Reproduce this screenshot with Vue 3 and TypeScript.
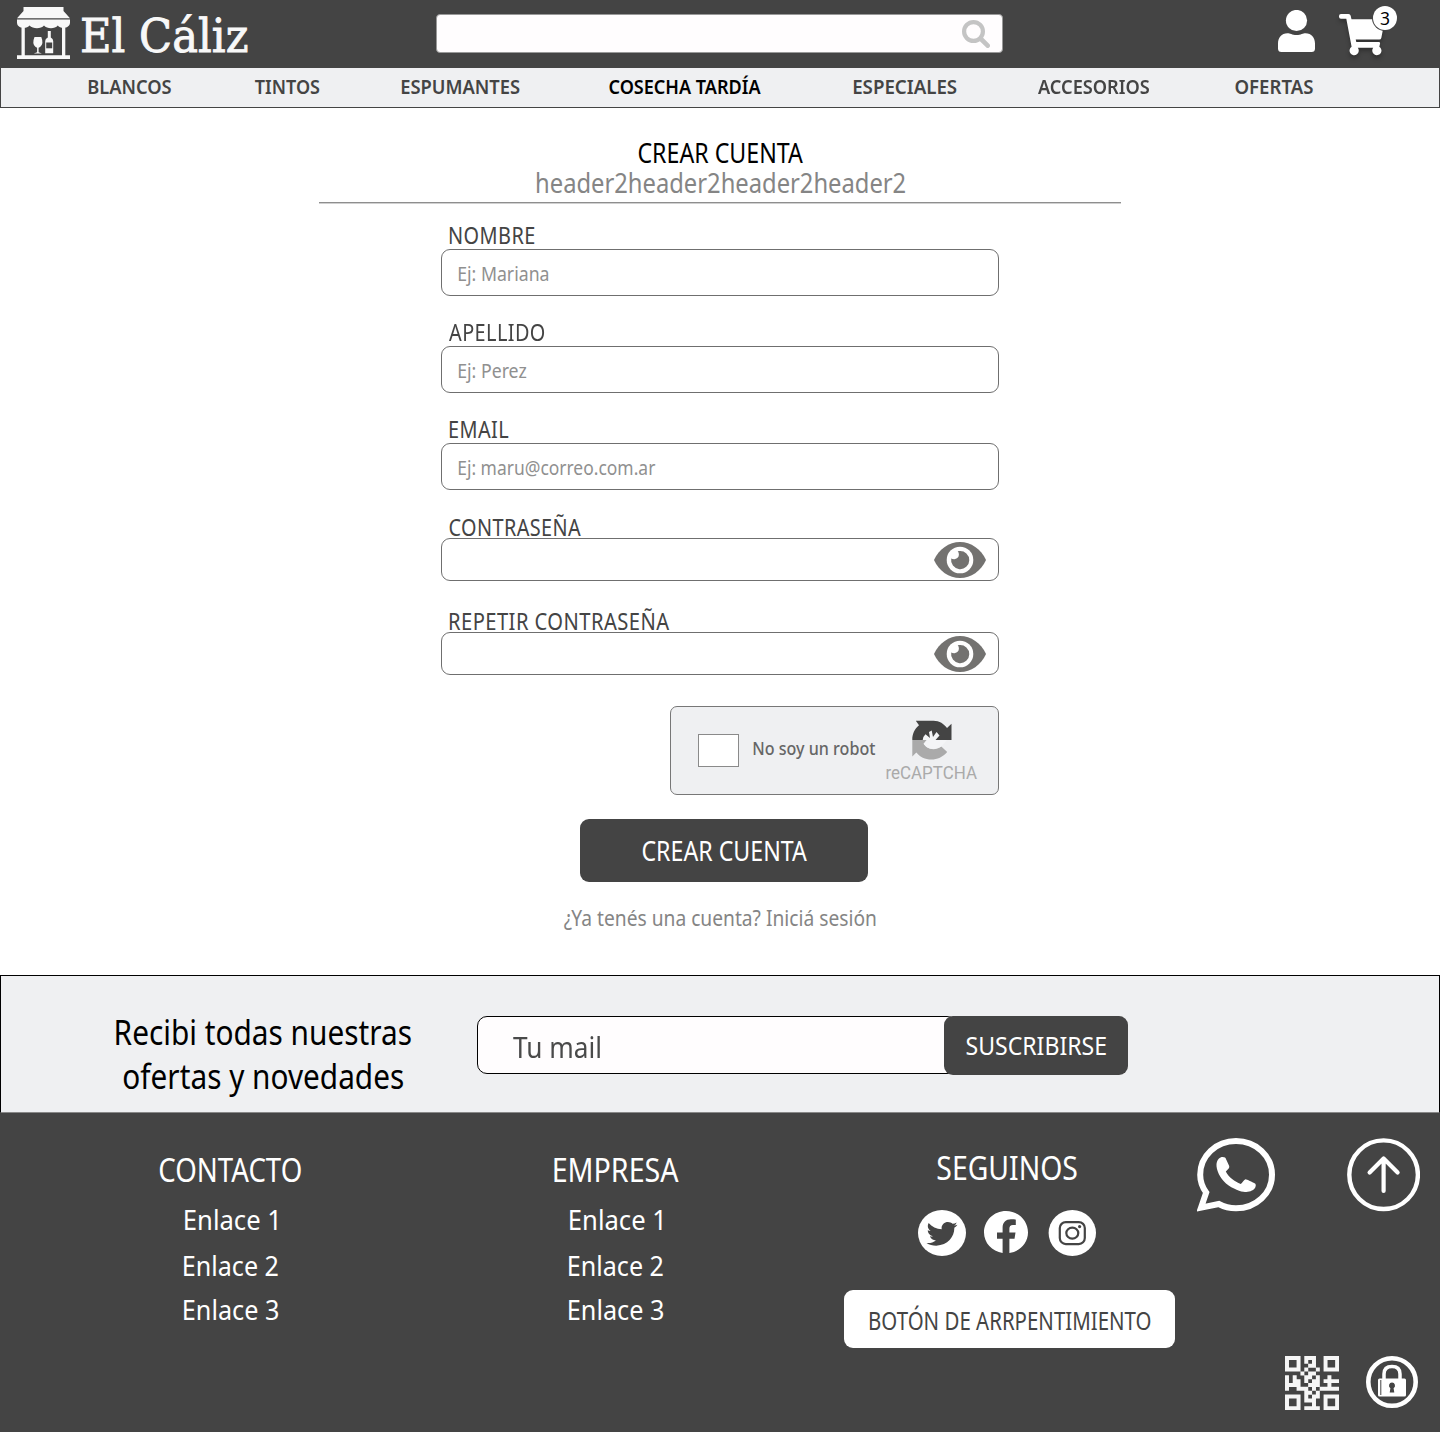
<script setup lang="ts">
import { ref } from 'vue'

// Condenses a text so that its visible ink spans exactly the given width.
// Metrics are taken at ten times the size, as the canvas rounds ink bounds;
const vFit = {
  mounted(el: HTMLElement, binding: { value: number }) {
    const width = binding.value
    const style = getComputedStyle(el)
    const ctx = document.createElement('canvas').getContext('2d')
    if (!ctx) return
    ctx.font = `${style.fontWeight} ${parseFloat(style.fontSize) * 10}px ${style.fontFamily}`
    const spacing = parseFloat(style.letterSpacing) || 0
    const text = (el.textContent || '').trim()
    const m = ctx.measureText(text)
    const left = m.actualBoundingBoxLeft / 10
    const ink = left + m.actualBoundingBoxRight / 10 + spacing * (text.length - 1) + 0.8
    const scale = width / ink
    const natural = el.getBoundingClientRect().width
    el.style.transform = `scaleX(${scale}) translateX(${left * 0.5}px)`
    el.style.marginRight = `${width - natural}px`
  },
}

const categories = [
  { name: 'BLANCOS', w: 83 },
  { name: 'TINTOS', w: 65 },
  { name: 'ESPUMANTES', w: 118.5 },
  { name: 'COSECHA TARDÍA', w: 152, active: true },
  { name: 'ESPECIALES', w: 103.5 },
  { name: 'ACCESORIOS', w: 112 },
  { name: 'OFERTAS', w: 78 },
]

const fields = ref([
  { label: 'NOMBRE', w: 85, hint: 'Ej: Mariana', hw: 90 },
  { label: 'APELLIDO', w: 96, hint: 'Ej: Perez', hw: 68 },
  { label: 'EMAIL', w: 59, hint: 'Ej: maru@correo.com.ar', hw: 197 },
])

const secrets = ref([
  { label: 'CONTRASEÑA', w: 132 },
  { label: 'REPETIR CONTRASEÑA', w: 220 },
])

const links: [string, number][] = [['Enlace 1', 92], ['Enlace 2', 94.5], ['Enlace 3', 94.5]]
const linkGroups = [
  { title: 'CONTACTO', w: 142, cls: 'contact' },
  { title: 'EMPRESA', w: 125, cls: 'company' },
]

const qrRows = [
  'XXXX.XXX..XXXX',
  'X..X.X.X..X..X',
  'X..X..XX..X..X',
  'XXXX.X..X.XXXX',
  '....X.XX......',
  'X.X..XX.X..X..',
  'X.XX.X.XX.XXXX',
  'XXXX..XXX..X..',
  'X..XXX.X.XXXXX',
  '.....XX.X.....',
  'XXXX.X.XX.XXXX',
  'X..X.XXX..X..X',
  'X..X...X..X..X',
  'XXXX.XXXX.XXXX',
]
const qrPath = qrRows
  .map((row, y) => [...row].map((c, x) => (c === 'X' ? `M${x} ${y}h1.03v1.03h-1.03z` : '')).join(''))
  .join('')
</script>

<template>
  <div class="page">
    <header class="top">
      <svg class="store" viewBox="0 0 53 52" width="53" height="52" fill="#f8f8f8">
        <path d="M6.500 0H46.500V4L53 11.300H0L6.500 4Z" />
        <path d="M0 12.500H53V15.500C53 22 43 22 40.800 18.500C38 22 30 22 27 18.500C24 22 16 22 12.500 18.500C10 22 0 22 0 15.500Z" />
        <path d="M4.500 18h3.300v31h-3.300zM45 18h3.300v31H45zM0 48.300h53V52H0z" />
        <path d="M17.500 30h6.800q2.800 7-1.200 10l-1.500.7v4.600l3.300 1.200H16.800l3.300-1.200v-4.600l-1.500-.7q-4-3-1.100-10z" />
        <path d="M30.800 24h3v6.500q2.400 1.300 2.400 3.500v12.300h-8V34q0-2.200 2.600-3.500z" />
        <path d="M29.200 35.500h6v5.800h-6z" fill="#444" />
      </svg>
      <span class="brand" v-fit="166">El Cáliz</span>
      <div class="search">
        <svg viewBox="0 0 28 28" width="28" height="28" fill="none" stroke="#c4c4c4">
          <circle cx="11.500" cy="11.500" r="9.400" stroke-width="4.200" />
          <path d="M18.500 18.500L25.700 25.700" stroke-width="4.600" stroke-linecap="round" />
        </svg>
      </div>
      <svg class="user" viewBox="0 0 37 42" width="37" height="42" fill="#fff">
        <circle cx="18.500" cy="10.500" r="10.600" />
        <path d="M9.500 23.300C12 23.300 14 25 18.500 25s6.500-1.700 9-1.700c6 0 9.500 4.500 9.500 10.200V38.500q0 3.500-3.500 3.500H3.500Q0 42 0 38.500V33.500c0-5.700 3.500-10.200 9.500-10.200z" />
      </svg>
      <div class="cart">
        <svg viewBox="0 0 46 42" width="46" height="42" fill="#fff">
          <path d="M2 0H9.500Q11.300 0 11.700 1.800L12.500 5.300H44Q46 5.300 45.500 7.500L42.300 24Q41.900 25.600 40.300 25.600H16.700L17.300 28H39.500Q41.500 28 41 29.700L40.300 32.700A4.600 4.600 0 1 1 34.200 33.800H18.800A4.600 4.600 0 1 1 12.600 32.800L7.300 4.700H2Q0 4.700 0 2.700V2Q0 0 2 0Z" />
        </svg>
        <span class="badge">3</span>
      </div>
    </header>

    <nav class="menu">
      <a v-for="c in categories" :key="c.name" :class="{ active: c.active }"><span v-fit="c.w">{{ c.name }}</span></a>
    </nav>

    <main>
      <div class="heading">
        <h1><span v-fit="165">CREAR CUENTA</span></h1>
        <h2><span v-fit="369">header2header2header2header2</span></h2>
      </div>
      <form class="form" @submit.prevent>
        <div v-for="f in fields" :key="f.label" class="field">
          <label><span v-fit="f.w">{{ f.label }}</span></label>
          <div class="box"><span v-fit="f.hw">{{ f.hint }}</span></div>
        </div>
        <div v-for="s in secrets" :key="s.label" class="field secret">
          <label><span v-fit="s.w">{{ s.label }}</span></label>
          <div class="box">
            <svg viewBox="0 0 52 36" width="52" height="36">
              <path d="M0 18C5 7 15 0 26 0S47 7 52 18C47 29 37 36 26 36S5 29 0 18Z" fill="#737270" />
              <circle cx="26" cy="18" r="13.300" fill="#fff" />
              <path d="M25.500 9A9.100 9.100 0 1 1 17.200 16.500Q18.500 17.300 20.500 17.200Q25 16.500 24.900 12.300Q24.800 10.500 23.700 9.300Z" fill="#737270" />
            </svg>
          </div>
        </div>
        <div class="captcha">
          <span class="check"></span>
          <span class="robot" v-fit="122">No soy un robot</span>
          <div class="mark">
            <svg viewBox="0 0 40 40" width="40" height="40">
              <path d="M3.800.8H21.500C27.500.8 32 4 35 8L39.500 3.800V20H0.300C.2 14 2.500 9 7 5.200Z" fill="#444" />
              <path d="M0.300 20H14.500L11.500 23.800C15 29.500 23 31 29.300 26.500L35.200 32C31 37 25 39.500 19.500 39.500 13 39.500 8 37 4.300 32.500L0.300 36.500Z" fill="#aaa" />
              <path d="M10.700 20Q10.500 17 13.500 14.200L18 18 17 12 19.700 10.600 21 17 24.500 12 27.500 15.500 23.500 20 35 20 29.300 26.500Q21 31 14.500 27L11.800 24 15.500 20Z" fill="#f4f5f7" />
            </svg>
            <span v-fit="91">reCAPTCHA</span>
          </div>
        </div>
      </form>
      <button class="create"><span v-fit="165">CREAR CUENTA</span></button>
      <p class="login"><span v-fit="312">¿Ya tenés una cuenta? Iniciá sesión</span></p>
    </main>

    <section class="news">
      <div class="pitch">
        <div><span v-fit="295">Recibi todas nuestras</span></div>
        <div><span v-fit="280">ofertas y novedades</span></div>
      </div>
      <div class="mail">
        <span v-fit="88">Tu mail</span>
      </div>
      <button class="subscribe"><span v-fit="140">SUSCRIBIRSE</span></button>
    </section>

    <footer class="foot">
      <div v-for="g in linkGroups" :key="g.title" class="group" :class="g.cls">
        <h3><span v-fit="g.w">{{ g.title }}</span></h3>
        <a v-for="l in links" :key="l[0]"><span v-fit="l[1]">{{ l[0] }}</span></a>
      </div>
      <div class="follow">
        <h3><span v-fit="140">SEGUINOS</span></h3>
        <div class="social">
          <svg viewBox="0 0 48 46" width="48" height="46">
            <ellipse cx="24" cy="23" rx="24" ry="23" fill="#fff" />
            <g transform="translate(8.500 9.200) scale(.0605 .057)">
              <path fill="#444" d="M459.400 151.700c.3 4.500.3 9.100.3 13.600 0 138.700-105.600 298.600-298.600 298.600-59.500 0-114.700-17.200-161.100-47.100 8.400 1 16.600 1.300 25.300 1.300 49.100 0 94.200-16.600 130.300-44.800-46.100-1-84.800-31.200-98.100-72.800 6.500 1 13 1.600 19.800 1.600 9.400 0 18.800-1.300 27.600-3.600-48.100-9.700-84.100-52-84.100-103v-1.300c14 7.800 30.200 12.700 47.400 13.300-28.300-18.800-46.800-51-46.800-87.400 0-19.500 5.200-37.400 14.300-53 51.700 63.700 129.300 105.300 216.400 109.800-1.600-7.800-2.600-15.900-2.600-24 0-57.800 46.800-104.900 104.900-104.900 30.200 0 57.500 12.700 76.700 33.100 23.700-4.500 46.500-13.300 66.600-25.300-7.800 24.400-24.400 44.800-46.100 57.800 21.100-2.300 41.600-8.100 60.400-16.200-14.300 20.800-32.200 39.300-52.600 54.300z" />
            </g>
          </svg>
          <svg class="fb" viewBox="0 0 44 43" width="44" height="43">
            <path fill="#fff" d="M44 21.600C44 9.700 34.200 0 22 0S0 9.700 0 21.600C0 32 8 40.500 18.600 42V27.800H13V21.600h5.600V16.800c0-5.500 3.300-8.500 8.300-8.500 2.400 0 4.900.4 4.900.4V14h-2.800c-2.700 0-3.600 1.700-3.600 3.400v4.200h6.100l-1 6.200h-5.100v14.200C36 40.500 44 32 44 21.600z" />
          </svg>
          <svg viewBox="0 0 48 46" width="48" height="46">
            <ellipse cx="24.300" cy="23" rx="23.700" ry="23" fill="#fff" />
            <g fill="none" stroke="#444" stroke-width="2.200">
              <rect x="11.800" y="12.100" width="25" height="22" rx="6" />
              <ellipse cx="24.300" cy="23.100" rx="6" ry="5.500" />
            </g>
            <circle cx="31.600" cy="16.600" r="1.600" fill="#444" />
          </svg>
        </div>
        <button class="regret"><span v-fit="281">BOTÓN DE ARRPENTIMIENTO</span></button>
      </div>
      <div class="tools">
        <div class="row">
          <svg viewBox="0 0 78 74" width="78" height="74">
            <path fill="none" stroke="#fff" stroke-width="6" d="M4 69.700L9.200 54.500C5.500 49.500 3.200 43.500 3.200 36.700 3.200 18 19 3 39 3S75 18 75 36.700 59 70.300 39 70.300C32.500 70.300 27 68.800 21.800 66Z" />
            <path fill="#fff" d="M19.500 26C20 21.500 23 19 25.500 19 28 19 28.500 19.700 29.200 21.500L32.200 28C32.700 29.500 31.500 31 28.800 33.500 32 39.500 37.500 43.500 43.800 46 45.500 44.500 47 41.500 48.500 41.200 50 41.200 55.500 44.200 57.500 45.200 59.500 46 58.800 48.500 58 50 56 53 51.500 54 48 54 44 54 36 51 29 45.500 23 40 19 32 19.500 26Z" />
          </svg>
          <svg viewBox="0 0 74 74" width="74" height="74" fill="none" stroke="#fff" stroke-width="4.400">
            <circle cx="37.600" cy="36.700" r="34.300" />
            <path d="M37.600 53V20.500M23.600 34.500L37.600 20.500 51.600 34.500" stroke-width="4.200" stroke-linecap="round" stroke-linejoin="round" />
          </svg>
        </div>
        <div class="row bottom">
          <svg viewBox="0 0 14 14" width="54" height="54" fill="#f6f6f6"><path :d="qrPath" /></svg>
          <svg viewBox="0 0 52 52" width="52" height="52">
            <circle cx="26" cy="26" r="23.700" fill="none" stroke="#fff" stroke-width="4.600" />
            <path d="M18 24V18Q18 10.500 26 10.500T34 18V24" fill="none" stroke="#fff" stroke-width="3.500" />
            <rect x="12" y="22.500" width="28" height="18" rx="1.500" fill="#fff" />
            <path d="M14.800 24v15" stroke="#444" stroke-width="1" />
            <path d="M26 26.500a3.100 3.100 0 0 1 1.600 5.700l.7 4.400h-4.600l.7-4.400A3.100 3.100 0 0 1 26 26.500z" fill="#444" />
          </svg>
        </div>
      </div>
    </footer>
  </div>
</template>

<style>
body {
  margin: 0;
  background: #fff;
}
</style>

<style scoped>
.page {
  width: 1440px;
  height: 1432px;
  overflow: hidden;
  display: flex;
  flex-direction: column;
  font-family: 'Noto Sans', 'Open Sans', sans-serif;
  color: #444;
}
span {
  display: inline-block;
  white-space: nowrap;
  transform-origin: left center;
}
h1, h2, h3, p {
  margin: 0;
  font-weight: 400;
}
button {
  border: 0;
  padding: 0;
  font-family: inherit;
  display: flex;
  justify-content: center;
  align-items: center;
}
svg {
  display: block;
  flex: none;
}
.top {
  height: 67px;
  flex: none;
  background: #444;
  display: flex;
  align-items: flex-start;
  padding-left: 17px;
}
.store {
  margin-top: 7px;
}
.brand {
  flex: none;
  margin: 6px 0 0 11px;
  font: 400 46.600px/60px 'DejaVu Serif', serif;
  color: #f8f8f8;
  -webkit-text-stroke: 0.900px #f8f8f8;
}
.search {
  box-sizing: border-box;
  width: 567px;
  height: 39px;
  flex: none;
  margin: 14px 0 0 189px;
  border: 1px solid #999;
  border-radius: 4px;
  background: #fffdfe;
  display: flex;
  justify-content: flex-end;
  align-items: center;
  padding-right: 12px;
}
.user {
  margin: 10px 0 0 275px;
}
.cart {
  position: relative;
  margin: 14px 0 0 24px;
}
.cart svg {
  filter: drop-shadow(0 3px 2px rgba(0, 0, 0, 0.3));
}
.badge {
  position: absolute;
  left: 34px;
  top: -8px;
  width: 24px;
  height: 24px;
  border-radius: 50%;
  background: #fff;
  box-shadow: 0 0 0 1px #444;
  color: #000;
  font-size: 17.500px;
  line-height: 24px;
  text-align: center;
}
.menu {
  box-sizing: border-box;
  height: 41px;
  flex: none;
  border: 1px solid #444;
  background: #eff0f2;
  display: grid;
  grid-template-columns: 158px 159px 186px 264px 176px 202px 158px;
  padding-left: 49px;
  font-size: 19.300px;
  font-weight: 600;
  line-height: 37px;
  text-align: center;
}
.active {
  color: #000;
}
main {
  height: 867px;
  flex: none;
  display: flex;
  flex-direction: column;
  align-items: center;
}
.heading {
  width: 802px;
  height: 64px;
  margin-top: 30px;
  border-bottom: 1px solid #8e8e8e;
  box-shadow: 0 1px 0 #d0d0d0;
  text-align: center;
}
h1 {
  font-size: 27px;
  line-height: 30px;
  color: #000;
}
h2 {
  font-size: 27px;
  line-height: 30px;
  color: #858585;
}
.form {
  width: 558px;
  margin-top: 18px;
  display: flex;
  flex-direction: column;
}
.field {
  margin-bottom: 22px;
}
.field label {
  display: block;
  padding-left: 8px;
  height: 28px;
  font-size: 23.200px;
  line-height: 28px;
  letter-spacing: 0.500px;
}
.box {
  box-sizing: border-box;
  height: 47px;
  border: 1px solid #6f6f6f;
  border-radius: 9px;
  padding-left: 16px;
  font-size: 20.500px;
  line-height: 46px;
  color: #909090;
}
.secret {
  margin: 3px 0 25px;
}
.secret label {
  height: 23px;
  line-height: 24px;
}
.secret .box {
  height: 43px;
  display: flex;
  justify-content: flex-end;
  align-items: center;
  padding-right: 12px;
}
.captcha {
  box-sizing: border-box;
  width: 329px;
  height: 89px;
  margin-top: 6px;
  align-self: flex-end;
  border: 1px solid #777;
  border-radius: 7px;
  background: #eff0f2;
  display: flex;
  align-items: flex-start;
  padding-left: 27px;
}
.check {
  box-sizing: border-box;
  flex: none;
  width: 41px;
  height: 33px;
  margin-top: 27px;
  border: 1px solid #8a8a8a;
  background: #fff;
}
.robot {
  flex: none;
  margin: 28px 0 0 14px;
  font-size: 18.500px;
  font-weight: 500;
  line-height: 25px;
  color: #666;
}
.mark {
  margin: 13px 0 0 11px;
  font-family: Roboto, sans-serif;
  font-size: 18.700px;
  line-height: 26px;
  color: #aaa;
}
.mark svg {
  margin-left: 26px;
}
.create {
  box-sizing: border-box;
  width: 288px;
  height: 63px;
  margin: 24px 0 0 8px;
  padding: 0 0 1px 1px;
  border-radius: 9px;
  background: #444;
  color: #fff;
  font-size: 27px;
}
.login {
  margin-top: 23px;
  font-size: 21.200px;
  line-height: 26px;
  color: #858585;
}
.news {
  box-sizing: border-box;
  height: 138px;
  flex: none;
  border: 1px solid #000;
  border-bottom-color: #888;
  background: #eff0f2;
  display: flex;
  align-items: flex-start;
}
.pitch {
  width: 297px;
  margin: 34px 0 0 113px;
  text-align: center;
  font-size: 35px;
  line-height: 44px;
  color: #000;
}
.mail {
  box-sizing: border-box;
  width: 480px;
  height: 58px;
  margin: 40px 0 0 66px;
  padding-left: 35px;
  border: 1px solid #000;
  border-radius: 10px;
  background: #fffdfe;
  font-size: 28.800px;
  line-height: 60px;
  color: #4a4a4a;
}
.subscribe {
  position: relative;
  box-sizing: border-box;
  width: 184px;
  height: 59px;
  margin: 40px 0 0 -13px;
  padding-bottom: 2px;
  border-radius: 9px;
  background: #444;
  color: #fff;
  font-size: 26px;
}
.foot {
  height: 319px;
  flex: none;
  background: #444;
  color: #fff;
  display: flex;
  align-items: flex-start;
}
.group {
  width: 240px;
  display: flex;
  flex-direction: column;
  align-items: center;
  font-size: 28px;
  line-height: 44px;
}
.contact {
  margin-left: 110px;
}
.company {
  margin-left: 145px;
}
.group h3 {
  margin-top: 35px;
  margin-bottom: 5px;
}
h3 {
  font-size: 33px;
  line-height: 44px;
}
.group a + a {
  margin-top: 2px;
}
.group a:last-child {
  margin-top: 0;
}
.follow {
  width: 331px;
  margin: 33px 0 0 109px;
}
.follow h3 {
  padding-left: 93px;
}
.social {
  display: flex;
  margin: 20px 0 34px 74px;
}
.fb {
  margin: 1px 20px 0 18px;
}
.regret {
  width: 331px;
  height: 58px;
  border-radius: 9px;
  background: #fff;
  color: #444;
  font-size: 25.500px;
  padding-top: 2px;
  box-sizing: border-box;
}
.tools {
  margin: 25px 0 0 22px;
}
.row {
  display: flex;
  gap: 71px;
}
.bottom {
  gap: 27px;
  margin: 144px 0 0 88px;
}
</style>
